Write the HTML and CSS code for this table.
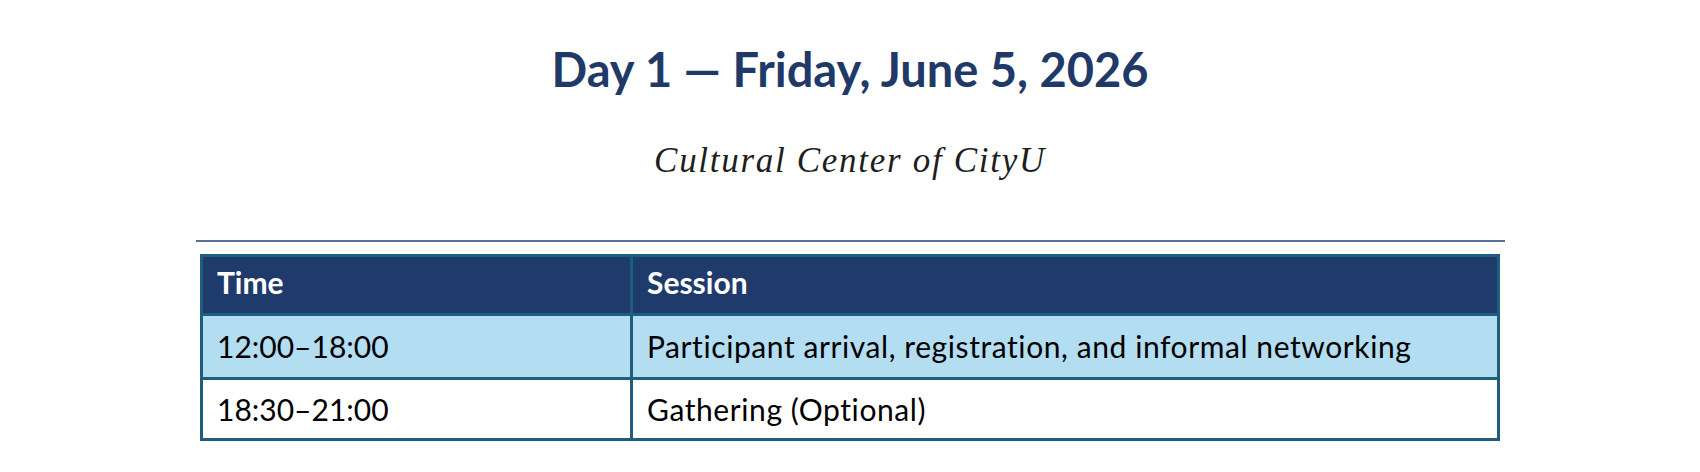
FILE: index.html
```html
<!DOCTYPE html>
<html lang="en">
<head>
<meta charset="utf-8">
<title>Day 1 — Friday, June 5, 2026</title>
<link rel="stylesheet" href="styles.css">
</head>
<body>
<main class="page">
  <h1 class="title">Day 1 — Friday, June 5, 2026</h1>
  <p class="venue">Cultural Center of CityU</p>
  <div class="rule"></div>
  <table class="schedule">
    <thead>
      <tr><th class="c-time">Time</th><th class="c-session">Session</th></tr>
    </thead>
    <tbody>
      <tr class="row shaded"><td class="c-time">12:00–18:00</td><td class="c-session">Participant arrival, registration, and informal networking</td></tr>
      <tr class="row last"><td class="c-time">18:30–21:00</td><td class="c-session">Gathering (Optional)</td></tr>
    </tbody>
  </table>
</main>
</body>
</html>
```

FILE: styles.css
```css
* { box-sizing: border-box; }

body {
  margin: 0;
  background: #ffffff;
}

.page {
  width: 1700px;
  display: flex;
  flex-direction: column;
  align-items: center;
}

.title {
  margin: 41px 0 0;
  font-family: "Lato", "Liberation Sans", sans-serif;
  font-weight: 700;
  font-size: 47px;
  line-height: 56px;
  color: #1f3a68;
}

.venue {
  margin: 44px 0 0;
  font-family: "Liberation Serif", serif;
  font-style: italic;
  font-size: 35px;
  line-height: 40px;
  letter-spacing: 1.7px;
  color: #1e1e1e;
}

.rule {
  margin-top: 59px;
  width: 1309px;
  height: 2px;
  background: #5a6e96;
}

.schedule {
  margin-top: 12px;
  width: 1300px;
  table-layout: fixed;
  border-collapse: separate;
  border-spacing: 0;
  border: 3px solid #1e5d7c;
  font-family: "Lato", "Liberation Sans", sans-serif;
  font-size: 30px;
  line-height: 36px;
  color: #000;
}

.schedule th,
.schedule td {
  padding: 11px 14px 0;
  text-align: left;
  vertical-align: top;
  white-space: nowrap;
}

.schedule .c-time {
  width: 430px;
  border-right: 3px solid #1e5d7c;
}

.schedule td.c-session {
  letter-spacing: 0.58px;
}

.schedule th {
  height: 59px;
  padding-top: 7px;
  background: #1f3b6c;
  color: #ffffff;
  font-weight: 700;
  border-bottom: 3px solid #1e5d7c;
}

.row.shaded td {
  height: 64px;
  padding-top: 12px;
  background: #b3ddf1;
  border-bottom: 3px solid #1e5d7c;
}

.row.last td {
  height: 58px;
  padding-top: 11px;
  background: #ffffff;
}
```
